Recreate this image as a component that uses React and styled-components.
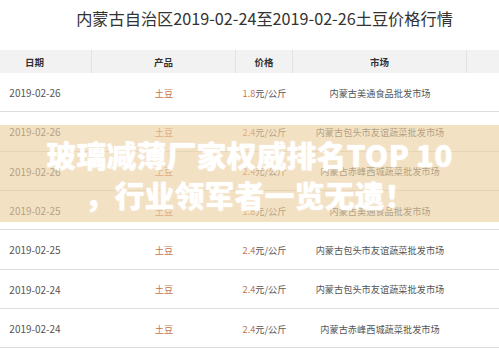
import styled, { createGlobalStyle } from 'styled-components';

const GlobalStyle = createGlobalStyle`
  body {
    margin: 0;
    background: #ffffff;
    font-family: 'Noto Sans CJK SC', 'Noto Sans', sans-serif;
    overflow: hidden;
  }
`;

const Page = styled.div`
  position: relative;
  width: 499px;
  height: 348px;
  overflow: hidden;
`;

const Title = styled.h1`
  margin: 0;
  height: 50px;
  padding-top: 5px;
  padding-left: 30px;
  box-sizing: border-box;
  text-align: center;
  font-size: 16.2px;
  font-weight: 400;
  line-height: 26px;
  color: #333333;
`;

const Table = styled.div`
  margin-left: -22px;
  width: 560px;
`;

const cols = '114px 144px 57px 174px 1fr';

const HeadRow = styled.div`
  display: grid;
  grid-template-columns: ${cols};
  height: 23px;
  background: #f2f2f2;
`;

const HeadCell = styled.div`
  display: flex;
  align-items: center;
  justify-content: center;
  font-size: 9.5px;
  font-weight: 700;
  color: #333333;
  border-right: 1px solid #e2e2e2;
`;

const Row = styled.div`
  display: grid;
  grid-template-columns: ${cols};
  height: 39.33px;
  box-sizing: border-box;
  border-bottom: 1px solid #dedede;
`;

const Cell = styled.div`
  display: flex;
  align-items: center;
  justify-content: center;
  font-size: ${(p) => p.$size || '9.2px'};
  color: ${(p) => (p.$accent ? '#c7754f' : '#555555')};
  padding-top: 1px;
`;

const Accent = styled.span`
  color: #c7754f;
`;

const Banner = styled.div`
  position: absolute;
  left: 0;
  top: 125px;
  width: 499px;
  height: 97px;
  background: rgba(235, 206, 160, 0.62);
  display: flex;
  flex-direction: column;
  align-items: center;
  justify-content: center;
`;

const BannerLine = styled.div`
  font-size: 30px;
  font-weight: 900;
  line-height: 40px;
  color: #ffffff;
  white-space: nowrap;
  text-shadow: 0 0 2px rgba(255, 255, 255, 0.6);
`;

const rows = [
  ['2019-02-26', '1.8', '内蒙古美通食品批发市场'],
  ['2019-02-26', '2.4', '内蒙古包头市友谊蔬菜批发市场'],
  ['2019-02-26', '2.4', '内蒙古赤峰西城蔬菜批发市场'],
  ['2019-02-25', '1.8', '内蒙古美通食品批发市场'],
  ['2019-02-25', '2.4', '内蒙古包头市友谊蔬菜批发市场'],
  ['2019-02-24', '2.4', '内蒙古包头市友谊蔬菜批发市场'],
  ['2019-02-24', '2.4', '内蒙古赤峰西城蔬菜批发市场'],
];

const App = () => {
  return (
    <Page>
      <GlobalStyle />
      <Title>内蒙古自治区2019-02-24至2019-02-26土豆价格行情</Title>
      <Table>
        <HeadRow>
          <HeadCell>日期</HeadCell>
          <HeadCell>产品</HeadCell>
          <HeadCell>价格</HeadCell>
          <HeadCell>市场</HeadCell>
          <HeadCell />
        </HeadRow>
        {rows.map(([date, price, market], i) => (
          <Row key={i}>
            <Cell $size='10px'>{date}</Cell>
            <Cell $accent>土豆</Cell>
            <Cell>
              <Accent>{price}</Accent>元/公斤
            </Cell>
            <Cell>{market}</Cell>
            <Cell />
          </Row>
        ))}
      </Table>
      <Banner>
        <BannerLine>玻璃减薄厂家权威排名TOP 10</BannerLine>
        <BannerLine>，行业领军者一览无遗！</BannerLine>
      </Banner>
    </Page>
  );
};

export default App;
